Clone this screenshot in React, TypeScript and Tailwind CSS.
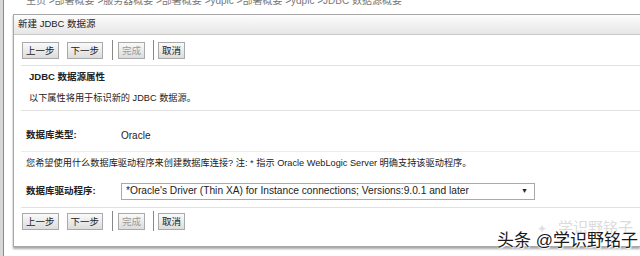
import React from "react";

const font = {
  fontFamily: '"Liberation Sans", "Noto Sans CJK SC", sans-serif',
};

function Btn({ label, disabled }: { label: string; disabled?: boolean }) {
  return (
    <button
      className={`h-[17px] px-[3px] text-[9.5px] leading-[15px] border border-[#a9a9a9] bg-gradient-to-b from-[#fafafa] to-[#dcdcdc] ${
        disabled ? "text-[#9a9a9a]" : "text-[#222]"
      }`}
    >
      {label}
    </button>
  );
}

function ButtonBar() {
  return (
    <div className="flex items-center h-[20px]">
      <Btn label="上一步" />
      <div className="w-[8px]" />
      <Btn label="下一步" />
      <div className="w-[1px] h-[20px] bg-[#888] ml-[9px] mr-[5px]" />
      <Btn label="完成" disabled />
      <div className="w-[1px] h-[20px] bg-[#888] ml-[8px] mr-[4px]" />
      <Btn label="取消" />
    </div>
  );
}

export default function App() {
  return (
    <div className="relative w-[640px] h-[256px] bg-white overflow-hidden text-[#222]" style={font}>
      <div className="absolute left-0 top-0 bottom-0 w-[4px] bg-[#d8d8d8] border-r border-[#8a8a8a]" />

      <div className="h-[14px] overflow-hidden pl-[26px]">
        <div className="-mt-[6px] text-[10px] leading-[14px] text-[#777] whitespace-nowrap">
          主页 &gt;部署概要 &gt;服务器概要 &gt;部署概要 &gt;ydplc &gt;部署概要 &gt;ydplc &gt;JDBC 数据源概要
        </div>
      </div>

      <div className="ml-[13px] h-[233px] border-l border-t border-b border-[#a8a8a8] shadow-[0_2px_2px_rgba(0,0,0,0.35)] flex flex-col">
        <div className="h-[20px] flex items-center pl-[4px] text-[9.5px] bg-gradient-to-b from-[#fdfdfd] to-[#e6e6e6] border-b border-[#c8c8c8]">
          新建 JDBC 数据源
        </div>

        <div className="pl-[8px] pt-[5px] h-[30px]">
          <ButtonBar />
        </div>

        <div className="ml-[7px] border-t border-[#e2e2e2]">
          <div className="h-[22px] flex items-center pl-[8px] text-[9.5px] font-bold">JDBC 数据源属性</div>
          <div className="h-[22px] flex items-center pl-[8px] text-[9.2px]">以下属性将用于标识新的 JDBC 数据源。</div>
        </div>

        <div className="ml-[7px] border-t border-[#e2e2e2] pt-[14px]">
          <div className="h-[20px] flex items-center pl-[5px] text-[9.5px]">
            <span className="w-[95px] font-bold">数据库类型:</span>
            <span className="text-[10px]">Oracle</span>
          </div>
        </div>

        <div className="ml-[7px] mt-[6px] border-t border-[#ececec]">
          <div className="h-[23px] flex items-center pl-[5px] text-[9.2px] whitespace-nowrap">
            您希望使用什么数据库驱动程序来创建数据库连接? 注: * 指示 Oracle WebLogic Server 明确支持该驱动程序。
          </div>
          <div className="h-[32px] flex items-center pl-[5px] text-[9.5px]">
            <span className="w-[95px] font-bold">数据库驱动程序:</span>
            <div className="w-[414px] h-[17px] border border-[#a9a9a9] flex items-center justify-between pl-[4px] pr-[6px] text-[10.2px] whitespace-nowrap">
              <span>*Oracle's Driver (Thin XA) for Instance connections; Versions:9.0.1 and later</span>
              <span className="text-[7px]">▼</span>
            </div>
          </div>
        </div>

        <div className="ml-[7px] border-t border-[#e2e2e2] pl-[1px] pt-[3px]">
          <ButtonBar />
        </div>
      </div>

      <div className="absolute left-[558px] top-[217px] text-[15px] text-[#dcdcdc] whitespace-nowrap">学识野铭子</div>
      <div className="absolute left-[537px] top-[220px] text-[12px] text-[#e0e0e0]">✦</div>
      <div className="absolute left-[497px] top-[231px] text-[17px] leading-[20px] text-[#1a1a1a] whitespace-nowrap [text-shadow:0_0_2px_#fff,0_0_2px_#fff,1px_1px_1px_#fff]">
        头条 @学识野铭子
      </div>
    </div>
  );
}
